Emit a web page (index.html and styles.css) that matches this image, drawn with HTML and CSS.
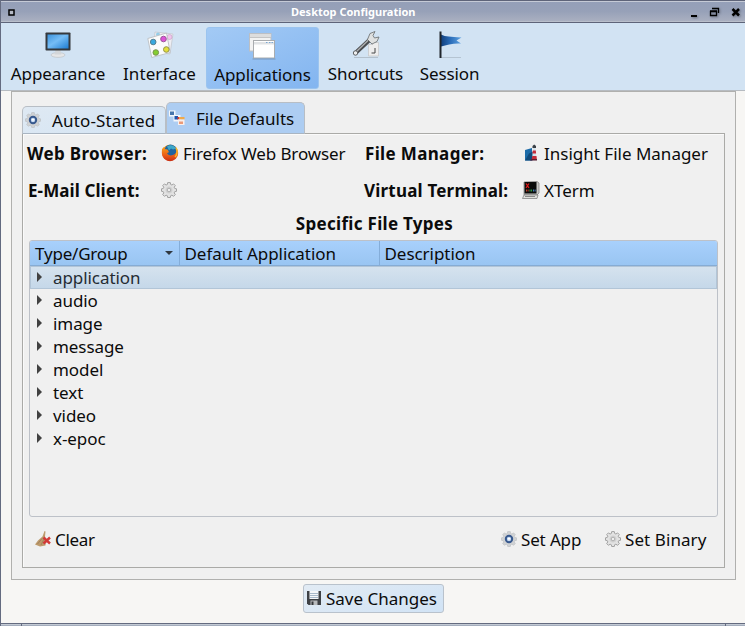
FILE: index.html
```html
<!DOCTYPE html>
<html lang="en">
<head>
<meta charset="utf-8">
<title>Desktop Configuration</title>
<link rel="stylesheet" href="styles.css">
</head>
<body>
<svg class="defs" width="0" height="0" aria-hidden="true">
  <defs>
    <linearGradient id="screen" x1="0" y1="0" x2="1" y2="1"><stop offset="0" stop-color="#3d93dc"/><stop offset=".45" stop-color="#75bdf6"/><stop offset="1" stop-color="#1e7cd2"/></linearGradient>
    <linearGradient id="flag" x1="0" y1="0" x2="1" y2="0"><stop offset="0" stop-color="#123f7c"/><stop offset=".45" stop-color="#2a6cb8"/><stop offset="1" stop-color="#5fa3e2"/></linearGradient>
    <linearGradient id="fox" x1="0" y1="0" x2="0" y2="1"><stop offset="0" stop-color="#f6a21c"/><stop offset=".6" stop-color="#ea5b17"/><stop offset="1" stop-color="#c92f13"/></linearGradient>
    <symbol id="cog" viewBox="0 0 16 16">
      <path d="M6.700.6h2.600l.4 1.900 1.200.5 1.700-1.100 1.700 1.700L13.200 5.200l.5 1.200 1.800.4v2.500l-1.800.4-.5 1.200 1.100 1.700-1.700 1.700-1.700-1.100-1.200.5-.4 1.800H6.700l-.4-1.800-1.200-.5-1.700 1.100-1.700-1.700 1.100-1.700-.5-1.200L.5 9.300V6.800l1.800-.4.5-1.200-1.100-1.600 1.700-1.700L5.100 3l1.200-.5z"/>
    </symbol>
    <symbol id="gear-gray" viewBox="0 0 16 16">
      <use href="#cog" fill="#e2e2e2" stroke="#9b9b9b" stroke-width=".9"/>
      <circle cx="8" cy="8" r="3.500" fill="#d2d2d2"/><circle cx="8" cy="8" r="1.800" fill="#eee" stroke="#a2a2a2" stroke-width=".8"/>
    </symbol>
    <symbol id="gear-blue" viewBox="0 0 16 16">
      <use href="#cog" fill="#d0d2d4" stroke="#b9bcc0" stroke-width=".6"/>
      <circle cx="8" cy="8" r="3.200" fill="#c3d8f2" stroke="#38598e" stroke-width="2"/><path d="M6.500 7h3L8 9.500z" fill="#fff"/>
    </symbol>
  </defs>
</svg>
<div class="window">
  <header class="titlebar">
    <svg class="menu-box" width="8" height="8"><rect x="1" y="1" width="5" height="5" fill="#b5bac5" stroke="#000" stroke-width="1.500"/></svg>
    <h1>Desktop Configuration</h1>
    <svg class="controls" width="50" height="12" fill="none" stroke="#000">
      <path d="M1 10h6" stroke-width="2"/>
      <path d="M22.500 2.500h6v4.500M22 2.500h7M20.500 5.500h6v4h-6z M20 5h7" stroke-width="1.300"/>
      <path d="M42.500 3l6.500 6.500M49 3l-6.500 6.500" stroke-width="2.500"/>
    </svg>
  </header>
  <nav class="toolbar">
    <a class="tool appearance">
      <svg width="28" height="28" viewBox="0 0 28 28"><ellipse cx="14" cy="24" rx="7" ry="2.400" fill="#e5e6e7" stroke="#b9bec3" stroke-width=".6"/><path d="M11.500 19h5l.8 4.500h-6.600z" fill="#d3d6d9"/><rect x="1.500" y="1.500" width="25" height="18" rx=".8" fill="#35383c"/><rect x="3.500" y="3.500" width="21" height="14" fill="url(#screen)"/></svg>
      <span>Appearance</span>
    </a>
    <a class="tool interface">
      <svg width="28" height="28" viewBox="0 0 28 28"><path d="M8 1l18 2-3 20L6 21z" fill="#eeeef3" stroke="#c4c8ce" stroke-width=".8"/><circle cx="22.500" cy="6" r="2.500" fill="#f1c5ec" stroke="#caa5ca" stroke-width=".7"/><circle cx="11" cy="3.500" r="2" fill="#94cde8"/><path d="M.8 7.500L19.500 2l3.700 19.500-18.500 5z" fill="#fbfbfb" stroke="#bcbfc3" stroke-width=".9"/><circle cx="6.200" cy="11" r="2.800" fill="#38a8df" stroke="#557f91"/><circle cx="16.500" cy="8" r="2.800" fill="#dd54d8" stroke="#9b5699"/><circle cx="8.800" cy="21.500" r="2.800" fill="#85ce30" stroke="#77924f"/><circle cx="19.300" cy="18.500" r="2.800" fill="#e2df3c" stroke="#949347"/></svg>
      <span>Interface</span>
    </a>
    <a class="tool applications active">
      <svg width="28" height="28" viewBox="0 0 28 28"><rect x="1.500" y="1.500" width="21.500" height="17.500" fill="#f2f2f2" stroke="#bcbfc4"/><path d="M2 3.500h20.500" stroke="#ddd" stroke-width="3"/><path d="M2 5.500h21" stroke="#c4c4c4"/><rect x="5.500" y="8.500" width="21" height="17.500" fill="#fff" stroke="#a9acaf"/><path d="M6 10h20v2.500H6z" fill="#e1e3e5"/><path d="M18 10.500h1.500m1.500 0h1.500m1 0h1.500" stroke="#7aa7d4"/><path d="M4.500 27h23" stroke="#718fb1" stroke-width=".8"/></svg>
      <span>Applications</span>
    </a>
    <a class="tool shortcuts">
      <svg width="28" height="28" viewBox="0 0 28 28"><path d="M2 26.500h24" stroke="#b3c0cc"/><path d="M16.500 13.500h4v-2h6V25h-10z" fill="#ededed" stroke="#c4c4c4" stroke-width=".7"/><path d="M23 17v5h-3.500" fill="none" stroke="#444"/><path d="M3.500 22L18 8.500" stroke="#4b4d50" stroke-width="4.300" stroke-linecap="round"/><path d="M4 21L17.500 8" stroke="#b0b2b3" stroke-width="1.300"/><path d="M15.500 8.500L18 2.500l5-2-2 4 1.500 2.500 4.500-1-2 4.500-5 2.500z" fill="#dfe1e1" stroke="#66696b" stroke-width=".8"/><circle cx="3.500" cy="22" r="2.200" fill="#eee" stroke="#616466"/></svg>
      <span>Shortcuts</span>
    </a>
    <a class="tool session">
      <svg width="28" height="28" viewBox="0 0 28 28"><path d="M5 26.500h20" stroke="#b5c4d2"/><path d="M5 3.500c5 2.500 9 2 20.500 3l-5 3 4.500 3C17 12 11 14 5 15.500z" fill="url(#flag)"/><path d="M4.500 .5v26.500" stroke="#20252b" stroke-width="2"/></svg>
      <span>Session</span>
    </a>
  </nav>
  <main class="frame">
    <div class="tabs">
      <div class="tab tab-auto"><svg width="16" height="16"><use href="#gear-blue"/></svg><span>Auto-Started</span></div>
      <div class="tab tab-files selected">
        <svg width="16" height="16" viewBox="0 0 16 16"><rect x="0" y=".5" width="6.500" height="6" fill="#f4f7fa"/><path d="M1 1.500h4v3.500H1z" fill="#4675ab"/><rect x="4.500" y="5" width="7" height="6.500" fill="#f3f6fb"/><path d="M5.500 6h3.500v3.500H5.500z" fill="#1c54aa"/><path d="M8.500 7h2V9.500h-2z" fill="#d33"/><rect x="10" y="7" width="5.500" height="2.500" fill="#f0a94a"/><path d="M9 9.500h6.500v5.500H9z" fill="#f8efec"/><path d="M10 11.500h4v2.500h-4z" fill="#eb9a78"/></svg>
        <span>File Defaults</span></div>
    </div>
    <section class="pane">
      <div class="defaults">
        <strong class="web">Web Browser:</strong>
        <button class="app firefox"><svg width="18" height="18" viewBox="0 0 18 18"><circle cx="9" cy="9" r="8.200" fill="url(#fox)"/><circle cx="9.500" cy="6.500" r="5.900" fill="#20649e"/><path d="M6 2.500c3-2.500 8-1 9 2l-3 1-2-1-2 2z" fill="#3ca8c9"/><path d="M1 5l2-2 .5 2 3 .5L8 8l-2 1.500c2 2.500 5 2.500 8 .5l2-3c1 6-3 10-7 10C4 17 0 12 1 5z" fill="url(#fox)"/><path d="M15 4c2 3 1 7-1 9" fill="none" stroke="#f8b626" stroke-width="1.500"/></svg><span>Firefox Web Browser</span></button>
        <strong class="fm">File Manager:</strong>
        <button class="app insight"><svg width="18" height="18" viewBox="0 0 18 18"><path d="M3 6l7-2v12.500H3z" fill="#1c6ba8"/><path d="M3 16.500l4-7 4-2v9z" fill="#104a7b"/><path d="M11 4h2.500l1 12.500h-4.500z" fill="#d7e2ea"/><path d="M10.800 6.500h3l.3 3h-3.600zM10.300 12h4.200l.3 3h-5z" fill="#c62b38"/><path d="M8 16.500h7V15H9z" fill="#5d1e30"/><path d="M10.500 4h3.500V2l-1.800-1.500L10.500 2z" fill="#394047"/></svg><span>Insight File Manager</span></button>
        <strong class="mail">E-Mail Client:</strong>
        <button class="app nomail"><svg width="16" height="16"><use href="#gear-gray"/></svg></button>
        <strong class="vt">Virtual Terminal:</strong>
        <button class="app xterm"><svg width="18" height="18" viewBox="0 0 18 18"><path d="M2 1l13-.5 2 1.500v10l-2 2H2z" fill="#c8c8c5" stroke="#777" stroke-width=".7"/><rect x="2.500" y="1" width="12" height="11.500" fill="#090b0a"/><path d="M4 2.500l3 4.500M7 2.500L4 7" stroke="#e01919" stroke-width="1.300"/><path d="M4 9.500h3" stroke="#bb3e29" stroke-width="2" stroke-dasharray="1 .6"/><path d="M7.500 9.500h3" stroke="#34a34a" stroke-width="2" stroke-dasharray="1 .6"/><path d="M11 9.500h3" stroke="#467cbb" stroke-width="2" stroke-dasharray="1 .6"/><path d="M2 14h14l-1 3.500H.5z" fill="#e0e0dc" stroke="#777" stroke-width=".7"/><path d="M3 15.500h10" stroke="#888"/></svg><span>XTerm</span></button>
      </div>
      <h2><span>Specific File Types</span></h2>
      <div class="tree">
        <div class="tree-head">
          <div class="col-type"><span>Type/Group</span><i class="sort"></i></div>
          <div class="col-app"><span>Default Application</span></div>
          <div class="col-desc"><span>Description</span></div>
        </div>
        <div class="row current"><i></i>application</div>
        <div class="row"><i></i>audio</div>
        <div class="row"><i></i>image</div>
        <div class="row"><i></i>message</div>
        <div class="row"><i></i>model</div>
        <div class="row"><i></i>text</div>
        <div class="row"><i></i>video</div>
        <div class="row"><i></i>x-epoc</div>
      </div>
      <div class="actions">
        <button class="act clear"><svg width="16" height="16" viewBox="0 0 16 16"><path d="M9.500 0l1 .5-.5 5 1 3-.5 6L5 15.500 0 13.500 3 9.500 7.500 5.500z" fill="#bd9a6c"/><path d="M7 7.500L2.500 13M9 8l-3 6" stroke="#9c7b55" stroke-width=".8"/><path d="M8.500 6.500l6.500 6m0-6l-6.500 6" stroke="#d23938" stroke-width="2.400"/></svg><span>Clear</span></button>
        <button class="act setapp"><svg width="16" height="16"><use href="#gear-blue"/></svg><span>Set App</span></button>
        <button class="act setbin"><svg width="16" height="16"><use href="#gear-gray"/></svg><span>Set Binary</span></button>
      </div>
    </section>
  </main>
  <footer>
    <button class="save"><svg width="16" height="16" viewBox="0 0 16 16"><path d="M1 1h14v14H2.500L1 13.500z" fill="#3e4145"/><path d="M3.500 1h9v8h-9z" fill="#f5f7f9"/><path d="M4 3.500h8M4 5.500h8M4 7.500h8" stroke="#94a8bd" stroke-width=".8"/><path d="M4.500 10.500h7V15h-7z" fill="#b9bbbd"/><path d="M5.500 11.500h2V15h-2z" fill="#34373a"/></svg><span>Save Changes</span></button>
  </footer>
  <div class="grip"></div>
</div>
</body>
</html>
```
FILE: styles.css
```css
* { box-sizing: border-box; }
body { margin: 0; overflow: hidden; font: 17px/23px "Noto Sans", "Open Sans", sans-serif; color: #0b0b0b; }
button { border: 0; padding: 0; background: none; font: inherit; color: inherit; letter-spacing: inherit; }
svg { display: block; flex: none; }
.defs { position: absolute; }
span, strong { white-space: nowrap; }
.window { width: 745px; height: 626px; display: flex; flex-direction: column; border-left: 1px solid #646b80; background: #f7f6f4; }

.titlebar { height: 23px; flex: none; display: flex; align-items: center; border-top: 1px solid #5e6479; border-bottom: 1px solid #5e6479; box-shadow: inset 0 1px #c5cad6, inset 0 -1px #b9bfcb; background: linear-gradient(#949fb8, #97a1b8 50%, #abb1c1); }
.menu-box { margin: 3px 0 0 7px; }
h1 { margin: 1px 0 0 275px; width: 126px; font-size: 11px; line-height: 18px; color: #fff; white-space: nowrap; }
.controls { margin: 1px 0 0 273px; filter: drop-shadow(1px 1px 1px #6a7181); }

.toolbar { height: 68px; flex: none; display: flex; border-bottom: 1px solid #b6bbc1; background: #d2e3f3; padding-top: 4px; }
.tool { display: flex; flex-direction: column; align-items: center; height: 62px; padding-top: 4px; }
.tool svg { margin-bottom: 3px; }
.tool span { letter-spacing: -.1px; }
.appearance { width: 114px; }
.interface { width: 91px; }
.interface svg { margin-left: 1px; }
.interface span { margin-left: -2px; letter-spacing: .1px; }
.applications { width: 113px; margin-right: -1px; }
.shortcuts { width: 95px; }
.session { width: 73px; }
.active { border: 1px solid #9bc4ef; border-radius: 3px; background: linear-gradient(155deg, #a3caf5, #83b5f0); }
.active svg { margin-left: -2px; }

.frame { width: 725px; height: 489px; margin-left: 10px; padding: 11px 10px; border: 1px solid #b0b0ae; background: #f0f0f0; flex: none; }
.tabs { display: flex; align-items: flex-end; height: 31px; position: relative; z-index: 1; }
.tab { display: flex; align-items: center; height: 28px; border: 1px solid #b8bec5; border-bottom-color: #a9b5c2; border-radius: 5px 5px 0 0; background: linear-gradient(160deg, #dfe9f3, #d3e4f4); }
.tab-auto { width: 144px; padding-left: 2px; gap: 11px; letter-spacing: .15px; }
.tab-files { width: 139px; height: 32px; padding-left: 2px; gap: 11px; }
.selected { background: #adcdf2; }
.pane { height: 435px; margin-top: -1px; border: 1px solid #aaaaa7; padding: 8px 6px 0; box-shadow: inset 1px 1px #fafafa; }
.defaults { height: 69px; display: grid; grid-template-columns: 132px 205px 156px 190px; grid-auto-rows: 37px; }
.defaults strong { margin-left: -2px; letter-spacing: .35px; }
.defaults .mail { margin-left: -1px; letter-spacing: .1px; }
.defaults .fm { margin-left: -1px; letter-spacing: .35px; }
.defaults .vt { letter-spacing: .2px; }
.app { display: flex; align-items: flex-start; height: 24px; gap: 4px; }
.app svg { margin-top: 2px; }
.nomail svg { margin-top: 3px; }
.firefox { letter-spacing: -.1px; }
h2 { margin: 0; padding: 1px 0 0 2px; height: 29px; text-align: center; font-size: 17px; line-height: 23px; letter-spacing: .3px; }
.tree { height: 277px; width: 689px; border: 1px solid #bdc1c8; border-radius: 3px; overflow: hidden; }
.tree-head { height: 25px; display: flex; border-bottom: 1px solid #86acd4; background: linear-gradient(#a8d0fc, #99c5f2); line-height: 25px; }
.tree-head > div { padding-left: 5px; }
.col-type { width: 150px; display: flex; align-items: center; justify-content: space-between; padding-right: 6px; border-right: 1px solid #84add9; letter-spacing: -.2px; }
.col-app { width: 200px; border-right: 1px solid #84add9; }
.col-app, .col-desc { text-indent: -.5px; letter-spacing: -.05px; }
.sort { margin-top: -1px; border: 4px solid transparent; border-top: 4px solid #303841; border-bottom: 0; }
.row { height: 23px; display: flex; align-items: center; padding-left: 7px; letter-spacing: -.07px; }
.row i { margin: -1px 11px 0 0; border: 5px solid transparent; border-left: 5px solid #414141; border-right: 0; }
.current { border: 1px solid #b2c5d7; padding-left: 6px; background: linear-gradient(#d5e2ee, #c5d8e9); color: #252c33; }
.actions { display: flex; align-items: center; height: 45px; }
.act { display: flex; align-items: center; gap: 4px; }
.act svg { margin-top: -2px; }
.clear { margin-left: 6px; width: 466px; letter-spacing: -.3px; }
.setapp { width: 104px; letter-spacing: -.15px; }
.setbin { letter-spacing: .08px; }

footer { height: 43px; flex: none; padding: 4px 0 0 302px; }
.save { width: 141px; height: 29px; display: flex; align-items: center; gap: 4px; padding-left: 2px; border: 1px solid #b9c2cc; border-radius: 3px; background: linear-gradient(160deg, #e2ebf4, #d1e3f5); }
.save svg { margin-top: -2px; }
.grip { height: 3px; flex: none; margin: 0; border-top: 1px solid #646b80; background: linear-gradient(90deg, transparent 20px, #646b80 20px 21px, transparent 21px 724px, #646b80 724px 725px, transparent 725px), linear-gradient(#c3cad4 1px, #a4adbd 1px); }
```
